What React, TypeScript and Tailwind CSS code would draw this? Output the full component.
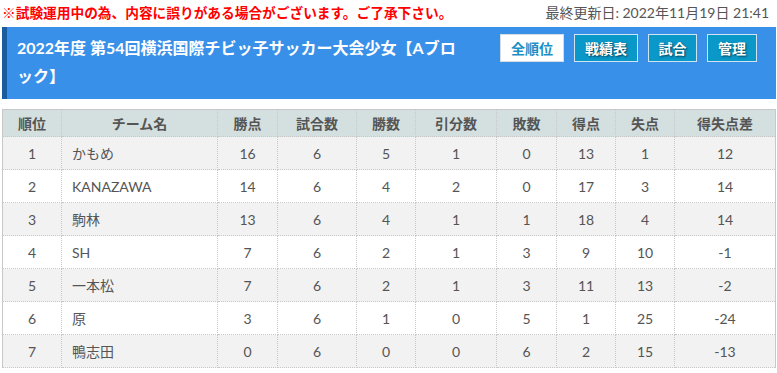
import React from "react";

const rows = [
  ["1", "かもめ", "16", "6", "5", "1", "0", "13", "1", "12"],
  ["2", "KANAZAWA", "14", "6", "4", "2", "0", "17", "3", "14"],
  ["3", "駒林", "13", "6", "4", "1", "1", "18", "4", "14"],
  ["4", "SH", "7", "6", "2", "1", "3", "9", "10", "-1"],
  ["5", "一本松", "7", "6", "2", "1", "3", "11", "13", "-2"],
  ["6", "原", "3", "6", "1", "0", "5", "1", "25", "-24"],
  ["7", "鴨志田", "0", "6", "0", "0", "6", "2", "15", "-13"],
];

const heads = ["順位", "チーム名", "勝点", "試合数", "勝数", "引分数", "敗数", "得点", "失点", "得失点差"];
const widths = [59, 156, 60, 79, 59, 81, 60, 59, 59, 101];

export default function App() {
  const font = { fontFamily: 'Lato, "Noto Sans CJK JP", sans-serif' };
  return (
    <div className="w-[777px] h-[373px] bg-white overflow-hidden" style={font}>
      <div className="flex items-center justify-between h-[26px] pl-[2px] pr-[8px]">
        <span className="text-[13.7px] font-bold text-[#ff0000] leading-none" style={{ fontFamily: '"Noto Sans CJK JP", sans-serif' }}>
          ※試験運用中の為、内容に誤りがある場合がございます。ご了承下さい。
        </span>
        <span className="text-[14px] text-[#555] leading-none">最終更新日: 2022年11月19日 21:41</span>
      </div>
      <div className="mt-[1px] ml-[2px] mr-[1px] h-[72px] flex bg-[#3990e9] border-l-[5px] border-[#1b5c9e]">
        <div className="flex-1 pl-[10px] pt-[7px] pr-[32px] text-white font-bold text-[16px] leading-[28px] [line-break:anywhere]">
          2022年度 第54回横浜国際チビッ子サッカー大会少女【Aブロック】
        </div>
        <div className="flex gap-[10px] pt-[7px] pr-[19px] shrink-0">
          <div className="w-[64px] h-[28px] flex items-center justify-center bg-white border border-[#d6dde2] text-[#1b8fc6] font-bold text-[14px]">全順位</div>
          {[["戦績表", 64], ["試合", 49], ["管理", 50]].map(([t, w]) => (
            <div
              key={t as string}
              style={{ width: w as number }}
              className="h-[28px] flex items-center justify-center bg-[#0a98c8] border border-[#cfe4f0] text-white font-bold text-[14px] [text-shadow:1px_1px_2px_rgba(0,0,0,0.6)]"
            >
              {t}
            </div>
          ))}
        </div>
      </div>
      <table className="mt-[10px] ml-[2px] border-collapse border border-[#c8c8c8] [border-bottom-style:dotted] text-[14px] text-[#555]" style={{ width: 773, tableLayout: "fixed" }}>
        <colgroup>
          {widths.map((w, i) => (
            <col key={i} style={{ width: w }} />
          ))}
        </colgroup>
        <thead>
          <tr className="h-[27px] bg-[#d4e0e0]">
            {heads.map((h, i) => (
              <th key={i} className="border border-dotted border-[#c8c8c8] font-bold text-center p-0 [border-top-style:solid]">
                {h}
              </th>
            ))}
          </tr>
        </thead>
        <tbody>
          {rows.map((r, ri) => (
            <tr key={ri} className={`h-[33px] ${ri % 2 === 0 ? "bg-[#f2f2f2]" : "bg-white"}`}>
              {r.map((c, ci) => (
                <td
                  key={ci}
                  className={`border border-dotted border-[#c8c8c8] p-0 ${ci === 1 ? "text-left pl-[10px]" : "text-center"} ${ci === 0 ? "[border-left-style:solid]" : ""} ${ci === 9 ? "[border-right-style:solid]" : ""}`}
                >
                  {c}
                </td>
              ))}
            </tr>
          ))}
        </tbody>
      </table>
    </div>
  );
}
